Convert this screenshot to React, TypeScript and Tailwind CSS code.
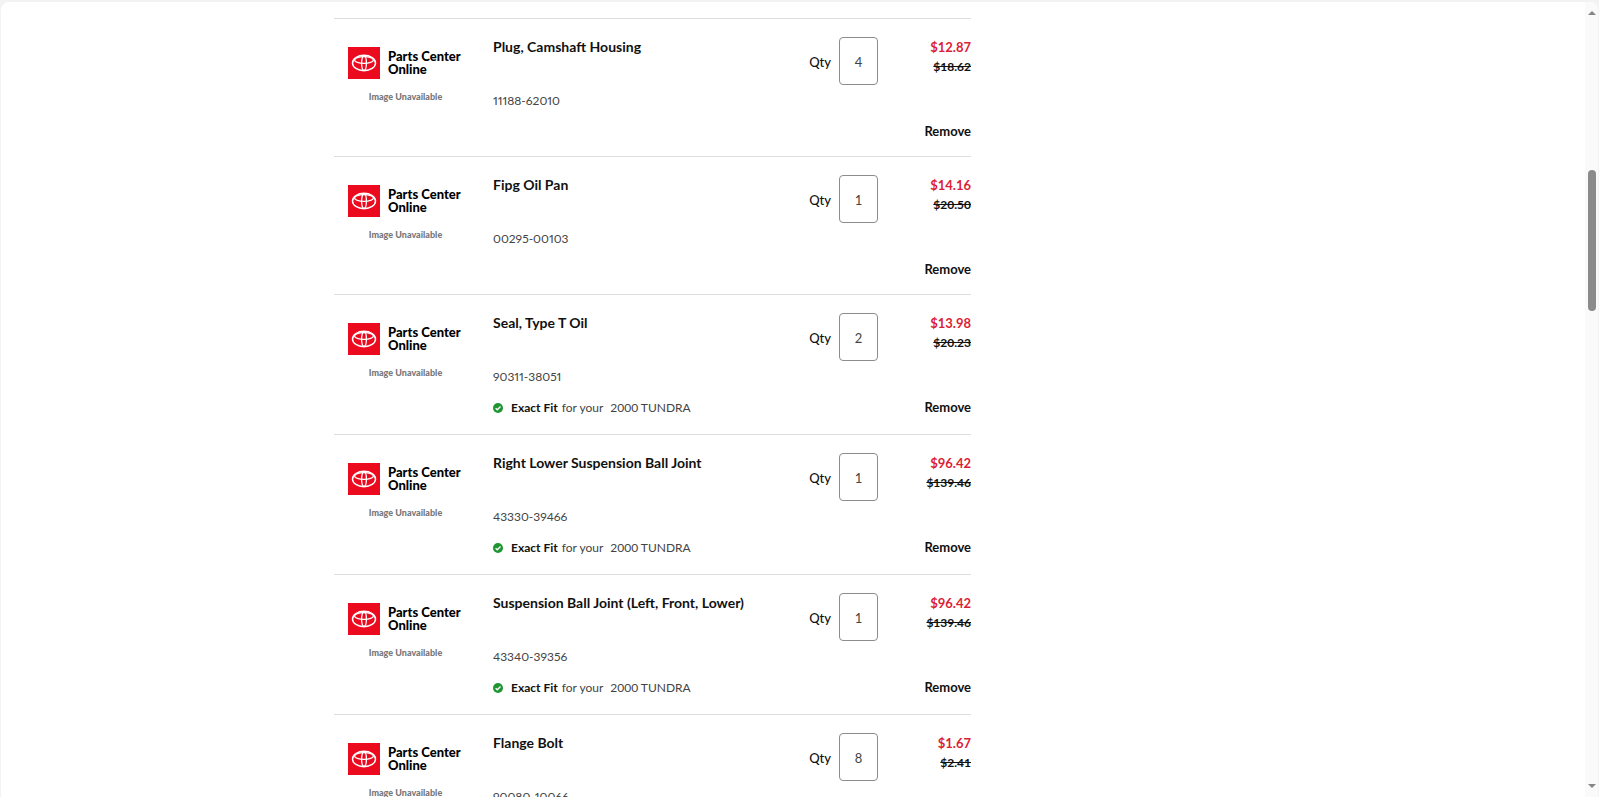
type Part = {
  name: string;
  number: string;
  qty: number;
  price: string;
  was: string;
  fits?: string;
};

const parts: Part[] = [
  { name: "Plug, Camshaft Housing", number: "11188-62010", qty: 4, price: "$12.87", was: "$18.62" },
  { name: "Fipg Oil Pan", number: "00295-00103", qty: 1, price: "$14.16", was: "$20.50" },
  { name: "Seal, Type T Oil", number: "90311-38051", qty: 2, price: "$13.98", was: "$20.23", fits: "2000 TUNDRA" },
  { name: "Right Lower Suspension Ball Joint", number: "43330-39466", qty: 1, price: "$96.42", was: "$139.46", fits: "2000 TUNDRA" },
  { name: "Suspension Ball Joint (Left, Front, Lower)", number: "43340-39356", qty: 1, price: "$96.42", was: "$139.46", fits: "2000 TUNDRA" },
  { name: "Flange Bolt", number: "90080-10066", qty: 8, price: "$1.67", was: "$2.41" },
];

function BrandMark() {
  return (
    <svg viewBox="0 0 32 32" className="size-8 shrink-0" aria-hidden="true">
      <rect width="32" height="32" fill="#eb0a1e" />
      <g fill="none" stroke="#fff">
        <ellipse cx="16" cy="16" rx="11.5" ry="7.7" strokeWidth="1.5" />
        <ellipse cx="16" cy="13" rx="9.4" ry="3.4" strokeWidth="1.3" />
        <ellipse cx="16" cy="16" rx="2.4" ry="7.2" strokeWidth="1.3" />
      </g>
    </svg>
  );
}

function Placeholder() {
  return (
    <div className="flex w-[143px] shrink-0 flex-col pt-[10px] pl-[14px]">
      <div className="flex items-center gap-2">
        <BrandMark />
        <div className="text-[13px] leading-[13px] font-black whitespace-nowrap text-black">
          Parts Center
          <br />
          Online
        </div>
      </div>
      <div className="mt-3 flex w-[115px] justify-center text-[9px] leading-3 font-black whitespace-nowrap text-[#77787b]">
        Image Unavailable
      </div>
    </div>
  );
}

function CheckBadge() {
  return (
    <svg viewBox="0 0 10 10" className="size-[10px] shrink-0" aria-hidden="true">
      <circle cx="5" cy="5" r="5" fill="#1f9632" />
      <path d="M2.6 5.2 4.3 6.8 7.5 3.5" fill="none" stroke="#fff" strokeWidth="1.3" />
    </svg>
  );
}

function PartRow({ part }: { part: Part }) {
  const id = `qty-${part.number}`;
  return (
    <li className="flex border-t border-[#dedede] pt-[18px] pb-[15px]">
      <Placeholder />
      <div className="flex min-w-0 flex-1 flex-col pl-4">
        <h2 className="text-sm leading-5 font-bold text-[#111]">{part.name}</h2>
        <p className="mt-[34px] text-xs leading-5 font-normal text-[#444] proportional-nums">{part.number}</p>
        {part.fits && (
          <p className="mt-[11px] flex items-center text-xs leading-5 font-normal text-[#444]">
            <CheckBadge />
            <span className="ml-2 font-bold text-[#111]">Exact Fit</span>
            <span className="ml-1">for your</span>
            <span className="ml-[7px]">{part.fits}</span>
          </p>
        )}
        {part.fits && <div className="h-px" />}
      </div>
      <div className="flex h-12 items-center gap-2">
        <label htmlFor={id} className="pt-px text-[13px] leading-5 font-medium text-[#111]">
          Qty
        </label>
        <input
          id={id}
          type="text"
          inputMode="numeric"
          defaultValue={part.qty}
          className="h-12 w-[39px] rounded border border-[#8c8c8c] bg-white pt-px text-center text-[13px] font-normal text-[#444]"
        />
      </div>
      <div className="flex w-[93px] flex-col items-end">
        <span className="text-[13px] leading-5 font-bold text-[#dc1e35]">{part.price}</span>
        <s className="text-xs leading-5 font-bold text-[#111]">{part.was}</s>
        <button type="button" className="mt-11 text-[13px] leading-5 font-bold text-[#111]">
          Remove
        </button>
      </div>
    </li>
  );
}

export default function App() {
  return (
    <div className="h-screen overflow-hidden bg-[#f3f3f3] px-px pt-[2px] font-[Lato,'Noto_Sans',sans-serif]">
      <div className="flex h-full overflow-hidden rounded-t-lg bg-white">
        <main className="min-w-0 flex-1 overflow-hidden pt-4">
          <div className="mx-auto flex w-full max-w-[918px]">
            <ul className="w-[637px]">
              {parts.map((part) => (
                <PartRow key={part.number} part={part} />
              ))}
            </ul>
          </div>
        </main>
        <div className="flex w-[13px] shrink-0 flex-col items-center bg-[#fafafa] py-[9px]" aria-hidden="true">
          <svg viewBox="0 0 8 4" className="h-1 w-2">
            <path d="M0 4 4 0 8 4Z" fill="#858585" />
          </svg>
          <div className="flex w-2 flex-1 flex-col py-[155px]">
            <div className="h-[141px] rounded-full bg-[#8b8b8b]" />
          </div>
          <svg viewBox="0 0 8 4" className="h-1 w-2">
            <path d="M0 0H8L4 4Z" fill="#858585" />
          </svg>
        </div>
      </div>
    </div>
  );
}
